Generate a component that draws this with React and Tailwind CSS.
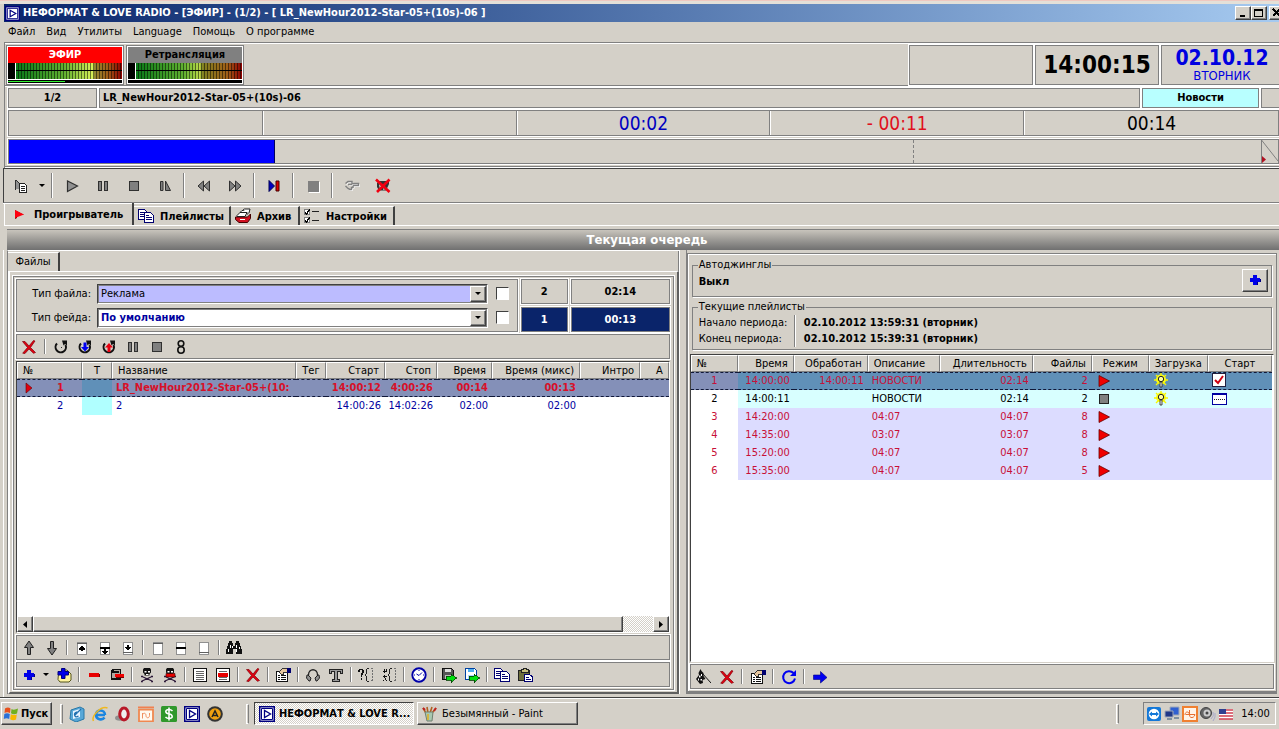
import React from 'react';

const CELL = 'border border-[#808080] shadow-[0_0_0_1px_#fff]';
const RAISED =
  'border border-t-white border-l-white border-r-[#404040] border-b-[#404040] shadow-[inset_-1px_-1px_0_#808080]';
const SUNKEN = 'border border-t-[#404040] border-l-[#404040] border-r-white border-b-white';

function Svg({ children, size = 16, crisp = true }) {
  return (
    <svg
      width={size}
      height={size}
      viewBox="0 0 16 16"
      fill="none"
      shapeRendering={crisp ? 'crispEdges' : 'auto'}
      className="shrink-0"
      aria-hidden="true"
    >
      {children}
    </svg>
  );
}

const RedCross = () => (
  <Svg crisp={false}>
    <path d="M1.500 2.500h2.500L8 7l4.500-5.500L14 2 9.500 8.500l5 5-2 .8L8 10l-4 4.500-2.300-.3L6.500 8.500z" fill="#e00010" stroke="#800008" strokeWidth=".7" />
  </Svg>
);
const Plus = () => (
  <Svg><path d="M6 3h4v3h3v4h-3v3H6v-3H3V6h3z" fill="#0000e8" /><path d="M7 13h4v-3h3V7h-1v3h-3v3H7z" fill="#000080" /></Svg>
);
const Stop = () => (
  <Svg><path d="M3.500 3.500h9v9h-9z" fill="#808080" stroke="#303030" /></Svg>
);
const Pause = () => (
  <Svg><path d="M3.500 3.500h3v9h-3zM9.500 3.500h3v9h-3z" fill="#808080" stroke="#303030" /></Svg>
);
const Caret = () => (
  <svg width="6" height="3" viewBox="0 0 6 3" aria-hidden="true"><path d="M0 0h6L3 3z" fill="#000" /></svg>
);
const Play = () => (
  <Svg crisp={false}><path d="M3.500 3v10.500L13.500 8z" fill="#909090" stroke="#303030" strokeWidth="1.200" /></Svg>
);
const Pages = () => (
  <Svg>
    <path d="M.5 1.500h6l2 2v8h-8z" fill="#fff" stroke="#000070" />
    <path d="M2 4.500h4M2 6.500h4M2 8.500h4" stroke="#000070" />
    <path d="M6.500 4.500h6l3 3v7h-9z" fill="#fff" stroke="#000070" />
    <path d="M8 7.500h3M8 9.500h6M8 11.500h6" stroke="#000070" />
  </Svg>
);
const GreyPages = () => (
  <Svg>
    <path d="M2.500 2v10M2.500 2l5 4" stroke="#303030" />
    <path d="M3 3v8h3V5z" fill="#909090" />
    <path d="M6.500 5.500h5l2 2v7h-7z" fill="#fff" stroke="#222" />
    <path d="M8 8.500h4M8 10.500h4M8 12.500h4" stroke="#222" />
  </Svg>
);
const FadeIcon = () => (
  <Svg crisp={false}><path d="M3.500 3.500h2.500v9H3.500zM8.500 3v9.500h5z" fill="#808080" stroke="#303030" /></Svg>
);
const Rewind = () => (
  <Svg crisp={false}><path d="M7.500 3v10L2 8zM13.500 3v10L8 8z" fill="#808080" stroke="#303030" /></Svg>
);
const Forward = () => (
  <Svg crisp={false}><path d="M2.500 3v10L8 8zM8.500 3v10L14 8z" fill="#808080" stroke="#303030" /></Svg>
);
const NextTrack = () => (
  <Svg crisp={false}>
    <path d="M3 2.500v11L8.500 8z" fill="#0000c0" stroke="#000050" />
    <path d="M10 3h3v10h-3z" fill="#d00" stroke="#400" />
  </Svg>
);
const StopGrey = () => (
  <Svg><path d="M4 14h10V4h1v11H4z" fill="#fff" /><path d="M3 3h11v11H3z" fill="#808080" /></Svg>
);
const Hand = ({ color = '#808080' }) => (
  <Svg crisp={false}>
    <path d="M1.500 5.500 4 3.500h4v2h6.500v2H9M9 7.500v2H7.500v2H6L4 10.500 1.500 8M4 6.500h4" stroke="#fff" transform="translate(1 1)" />
    <path d="M1.500 5.500 4 3.500h4v2h6.500v2H9M9 7.500v2H7.500v2H6L4 10.500 1.500 8M4 6.500h4" stroke={color} strokeWidth="1.400" />
  </Svg>
);
const HandCross = () => (
  <Svg crisp={false}>
    <path d="M2 5 4 3h10v3l-3 6.500H4L2 9z" fill="#333" />
    <path d="m4 6 3 3-2 3zM9 9l2 2-3 1z" fill="#e8d8d0" />
    <path d="m1 1.500 13.500 12.500M14.500 1.500 2 14" stroke="#f00010" strokeWidth="2.600" />
  </Svg>
);
const RedPlay = () => (
  <Svg crisp={false}><path d="M3 2.500v11L13.500 8z" fill="#f00000" stroke="#600" strokeWidth=".8" /></Svg>
);
const TabPlay = () => (
  <Svg crisp={false}><path d="M3 3v9l2-1V8l7 0z" fill="#700" /><path d="M3 3v8l9-3.500z" fill="#ff0010" /></Svg>
);
const Archive = () => (
  <Svg crisp={false}>
    <path d="M.5 9h12l3-3v4.500l-3 4H4l-3.500-3z" fill="#d01020" stroke="#400" />
    <path d="m2 7.500 3-3h7l-2 4H2zM5 4.500l2-2h7l-1.500 4" fill="#fff" stroke="#222" />
    <path d="m8 2 1.500-1h5.500l-1 4" fill="#fff" stroke="#222" />
    <path d="M5 11.500h5" stroke="#fff" />
  </Svg>
);
const Checks = () => (
  <Svg>
    <path d="M.5 1.500h5v5h-5zM.5 9.500h5v5h-5z" fill="#fff" stroke="#808080" />
    <path d="m1 4 1.500 2L6 1M1 12l1.500 2L6 9" stroke="#000" strokeWidth="1.300" />
    <path d="M8 3.500h7M8 12.500h7" stroke="#222" />
  </Svg>
);
const Loop = ({ arrow }) => (
  <Svg crisp={false}>
    <path d="M4 4.500A5.200 5.200 0 1 0 12.500 6" stroke="#111" strokeWidth="2" />
    <path d="M9 1.500h5v5l-2-1.500-1.500 1.500z" fill="#111" />
    {arrow === 'down' && <path d="M6.500 3.500h3V8h2.500l-4 4.500L4 8h2.500z" fill="#0000f0" />}
    {arrow === 'up' && <path d="M6.500 13h3V8.500h2.500L8 4 4 8.500h2.500z" fill="#e80010" />}
    {!arrow && <path d="M8 8h1v1H8z" fill="#333" />}
  </Svg>
);
const Eight = () => (
  <Svg crisp={false}>
    <circle cx="8" cy="4.500" r="2.800" stroke="#111" strokeWidth="1.600" />
    <circle cx="8" cy="11" r="3.200" stroke="#111" strokeWidth="1.600" />
  </Svg>
);
const ArrowUp = () => (
  <Svg crisp={false}><path d="m8 1 4.500 6.500H9.500v7h-3v-7H3.500z" fill="#808080" stroke="#222" /></Svg>
);
const ArrowDown = () => (
  <Svg crisp={false}><path d="M8 15 3.500 8.500h3v-7h3v7h3z" fill="#808080" stroke="#222" /></Svg>
);
const Sheet = ({ bar, arrow }) => (
  <Svg>
    <path d="M3.500 2.500h9v12h-9z" fill="#fff" stroke="#909090" />
    {bar === 'top' && <path d="M3 3h10v1H3z" fill="#606060" />}
    {bar === 'mid' && <path d="M3 7h10v2H3z" fill="#000" />}
    {bar === 'low' && <path d="M3 12h10v1H3z" fill="#606060" />}
    {arrow === 'up' && <path d="M7 6h2v1h1v1h1v2H9v1H7v-1H5V8h1V7h1z" fill="#000" />}
    {arrow === 'mid' && <path d="M7 9h2v2h2v1h-1v1H9v1H7v-1H6v-1H5v-1h2z" fill="#000" />}
    {arrow === 'down' && <path d="M7 5h2v2h2v1h-1v1H9v1H7V9H6V8H5V7h2z" fill="#000" />}
  </Svg>
);
const Binoculars = () => (
  <Svg>
    <path d="M3 1h3v2h1v3h2V3h1V1h3v2h1v3h1v3h1v5h-6V9H7v5H0V9h1V6h1V3h1z" fill="#111" />
    <path d="M4 5h1v3H4zM2 9h1v3H2zM10 5h1v3h-1zM10 9h1v3h-1zM6 6h1v2H6zM13 7h1v2h-1z" fill="#fff" />
  </Svg>
);
const PlusBox = () => (
  <Svg crisp={false}>
    <path d="M2.500 6h2l1.500-3h5l4 4v6l-2 2h-9l-2-2.500z" fill="#fff4a0" stroke="#55551c" />
    <path d="M5.500 1.500h3.500v3h3.500V8H9v3.500H5.500V8H2V4.500h3.500z" fill="#0000e8" stroke="#000080" />
  </Svg>
);
const Minus = () => (
  <Svg><path d="M3 6h10v4H3z" fill="#e80000" /><path d="M4 10h10V7h-1v3H4z" fill="#700" /></Svg>
);
const MinusBox = () => (
  <Svg>
    <path d="M2.500 4.500 4.500 2.500h7v10h-9z" fill="#b0a8a0" stroke="#111" strokeWidth="1.500" />
    <path d="M2 5h8M3 11.500h8" stroke="#111" strokeWidth="1.500" />
    <path d="M6 7h9v3H6z" fill="#f00000" />
    <path d="M7 10h8v1H7z" fill="#700" />
  </Svg>
);
const Skull = ({ red }) => (
  <Svg crisp={false}>
    <path d="M5 1h6l1 1.500v3L10.500 7v1.500h-5V7L4 5.500v-3z" fill="#111" />
    <path d="M5.500 4h2v1.500h-2zM9 4h2v1.500H9zM7 7h2.500v1H7z" fill="#fff" />
    <path d="m3 9.500 10 4.500M13 9.500 3 14M2 9.500h2M12 9.500h2M2 14.500h2M12 14.500h2" stroke="#2b1838" strokeWidth="1.300" />
    {red && <path d="M4 6.500h9v3.500H4z" fill="#e80000" stroke="#300" strokeWidth=".6" />}
  </Svg>
);
const ListSheet = ({ red }) => (
  <Svg>
    <path d="M1.500 1.500h13v13h-13z" fill="#fff" stroke="#111" />
    <path d="M4 4.500h8M4 6.500h8M4 8.500h8M4 10.500h8M4 12.500h8" stroke="#666" />
    {red && <path d="M3 6h10v4H3z" fill="#e80000" />}
  </Svg>
);
const Properties = () => (
  <Svg>
    <path d="M1.500 4.500h11v10h-11z" fill="#fff" stroke="#111" />
    <path d="M3 8.500h2M6 8.500h5M3 10.500h2M6 10.500h5M3 12.500h2M6 12.500h5" stroke="#111" />
    <path d="M4 5 8 1h4v4.500H9L8 8 6 7z" fill="#e8c8a0" stroke="#333" />
    <path d="M12 1h4v5h-4z" fill="#000070" />
  </Svg>
);
const Headphones = () => (
  <Svg crisp={false}>
    <path d="M3.500 10V8C3.500 1 12.500 1 12.500 8v2" stroke="#222" strokeWidth="1.300" />
    <path d="M2 8h1l3 3-1 3H4L1.500 11zM14 8h-1l-3 3 1 3h1l2.500-3z" fill="#909090" stroke="#222" />
  </Svg>
);
const LetterT = () => (
  <Svg>
    <path d="M1.500 2.500h13v4h-2v-2h-3v8h2v2h-7v-2h2v-8h-3v2h-2z" fill="#999" stroke="#222" />
  </Svg>
);
const Braces = ({ query }) => (
  <Svg>
    {query ? (
      <path d="M1 5V3.500L2 2.500h2l1 1v2L3.500 8v1.500M3.500 11v2" stroke="#111" strokeWidth="1.800" />
    ) : (
      <path d="M3 2v4M5 2v2H2M2 9h4M3 8v3M2 13h1M5 13h1M4 11v2" stroke="#111" />
    )}
    <path d="M10.500 1.500h-1l-1 1v4l-1 1.500 1 1.500v4l1 1h1" stroke="#222" />
    <path d="M12.500 1.500h2v12h-2" stroke="#707070" strokeDasharray="2 1" />
  </Svg>
);
const Clock = () => (
  <Svg crisp={false}>
    <circle cx="8" cy="8" r="6.700" fill="#fff" stroke="#0000a8" strokeWidth="1.900" />
    <path d="M8 3v1M8 12v1M3 8h1M12 8h1M11 5.500 8 8.500 5.500 7" stroke="#0000a8" />
  </Svg>
);
const DiskArrow = ({ blue }) => (
  <Svg>
    <path d="M1.500 1.500h9l2 2v9h-11z" fill={blue ? '#fff' : '#555'} stroke={blue ? '#0040a0' : '#111'} />
    <path d="M4 2h6v3H4z" fill={blue ? '#50b0f0' : '#ddd'} />
    <path d="M4 8h6v4H4z" fill={blue ? '#a8d8ff' : '#bbb'} />
    <path d="M5 9h5V7l5.500 4-5.500 4.500V13H5z" fill="#00e010" stroke="#004000" strokeWidth=".8" />
  </Svg>
);
const Paste = () => (
  <Svg>
    <path d="M1.500 3.500h11v10h-11z" fill="#6e6e3c" stroke="#222" />
    <path d="M4 2h2V1h3v1h2v3H4z" fill="#c8c080" stroke="#222" />
    <path d="M7.500 7.500h5l2.500 2v5H7.500z" fill="#fff" stroke="#000070" />
    <path d="M9 10.500h3M9 12.500h5" stroke="#000070" />
  </Svg>
);
const Tool = () => (
  <Svg crisp={false}>
    <path d="m5.500 0-2 4 .5 2-3 4 4 5 3-1-.5-3 3-1-2-3V4L6.500 2z" fill="#111" />
    <path d="M4 6.500h1.500v2H4zM5.500 10H7v1.500H5.500zM3 9.500h1v2H3zM6 5h1v2H6z" fill="#fff" />
    <path d="m7 4 9 10" stroke="#111" />
  </Svg>
);
const Refresh = () => (
  <Svg crisp={false}>
    <path d="M12.500 4A6 6 0 1 0 14 9.500" stroke="#0000f0" strokeWidth="2" />
    <path d="M15 1v6H9z" fill="#0000f0" />
  </Svg>
);
const BlueArrow = () => (
  <Svg crisp={false}><path d="M1.500 6h7V2.500L15 8.500 8.500 14v-3.500h-7z" fill="#0000f0" stroke="#000080" strokeWidth=".6" /></Svg>
);
const Bulb = () => (
  <Svg crisp={false}>
    <circle cx="8" cy="6.500" r="5" fill="#ffff20" />
    <path d="M8 0v14M1 7h14M3 2l10 10M13 2 3 12" stroke="#f8f800" strokeWidth="1.400" />
    <circle cx="8" cy="6" r="2.700" fill="#ffffa0" stroke="#222" />
    <path d="M7 9h2v5H7z" fill="#eee" stroke="#222" strokeWidth=".8" />
  </Svg>
);
const StopSmall = () => (
  <Svg><path d="M3.500 3.500h9v9h-9z" fill="#808080" stroke="#222" /></Svg>
);
const CalendarBox = () => (
  <Svg>
    <path d="M.5 2.500h14v11H.5z" fill="#fff" stroke="#0000a0" />
    <path d="M1 3h13v1H1z" fill="#0000a0" />
    <path d="M2 8.500h11" stroke="#222" strokeDasharray="1 1" />
  </Svg>
);
const AppLogo = ({ size = 16 }) => (
  <Svg size={size} crisp={false}>
    <path d="M0 0h16v16H0z" fill="#000080" />
    <path d="M1.500 1.500h13v13h-13z" fill="#fff" />
    <path d="M2.500 2.500h11v11h-11z" stroke="#000080" />
    <path d="M5.500 4.500v7l6-3.500z" fill="#fff" stroke="#000080" strokeWidth="1.300" />
  </Svg>
);
const WindowsFlag = () => (
  <Svg crisp={false}>
    <path d="M2 2.500q3-2 5.500 0L7 7Q4 5.500 1.500 7z" fill="#e8501c" />
    <path d="M8.500 3Q11 4.500 15 2.500L14 7.500q-3 1.500-6-.2z" fill="#70b020" />
    <path d="M1.300 8Q4 6.500 6.800 8l-.6 5Q3.500 11.500.8 13z" fill="#2870d8" />
    <path d="M7.800 8.300q3 1.500 6 .2l-.8 5q-3 1.500-5.800-.2z" fill="#f8b800" />
  </Svg>
);
const DesktopIcon = () => (
  <Svg crisp={false}>
    <path d="m2 4 9-3 4 2v10l-8 3-6-3z" fill="#58a8d8" stroke="#2878a8" />
    <path d="m4 5 7-2v8l-7 2z" fill="#e8f4ff" />
    <path d="M9.500 6Q5 6 5.500 9t4 1M6 9l6-6" stroke="#2070b0" strokeWidth="1.300" />
  </Svg>
);
const BrowserE = () => (
  <Svg crisp={false}>
    <path d="M13 9H4.500M13 9c0-6-9-6-9-.5 0 5.500 6.500 6 8.500 3" stroke="#1c86e0" strokeWidth="2.600" />
    <path d="M1.500 15C-1 10 9-.5 15.500 2" stroke="#f0b820" strokeWidth="1.500" />
  </Svg>
);
const OperaO = () => (
  <Svg crisp={false}>
    <ellipse cx="5" cy="12" rx="5" ry="2.800" fill="#909090" />
    <ellipse cx="9" cy="8" rx="4.300" ry="6" fill="#eee" stroke="#b81828" strokeWidth="3" />
  </Svg>
);
const WaveApp = () => (
  <Svg crisp={false}>
    <path d="M0 .5h16v1.500H0z" fill="#f08050" />
    <path d="M1 3.500h14v12H1z" fill="#fffaf0" stroke="#f08850" strokeWidth="1.800" />
    <path d="M4.500 7v5.500M4.500 9.500c0-3 3.500-3 3.500 0s3.500 3 3.500 0V7" stroke="#f09060" />
  </Svg>
);
const WaveTray = () => (
  <Svg crisp={false}>
    <path d="M0 0h16v16H0z" fill="#f08030" />
    <path d="M2 2h12v12H2z" fill="#fff4e8" />
    <path d="M3 9c0-4 4.500-4 4.500 0s5 3 5.500-.5H4M7.500 4v5" stroke="#e87030" />
  </Svg>
);
const Dollar = () => (
  <Svg crisp={false}>
    <rect width="16" height="16" rx="1.500" fill="#30982c" />
    <path d="M11.500 5Q10 3.500 8 3.500C3.500 3.500 4 7.500 8 8s4.500 4.500 0 4.500Q6 12.500 4.500 11M8 1.500v13" stroke="#fff" strokeWidth="1.600" />
  </Svg>
);
const CircleA = () => (
  <Svg crisp={false}>
    <circle cx="8" cy="8" r="7.800" fill="#333" />
    <circle cx="8" cy="8" r="5.800" fill="#f0a010" />
    <path d="m5 11 3-6 3 6M6 9.500h4" stroke="#222" strokeWidth="1.500" />
  </Svg>
);
const PaintCup = () => (
  <Svg crisp={false}>
    <path d="m4 7-3-5M6 7 5 1M8 7l2-6M10 7l4-5" stroke="#b06020" strokeWidth="1.600" />
    <path d="m1 2 2 2M14 2l-2 3" stroke="#c02020" strokeWidth="2" />
    <path d="M3 6h8l-1 9H5z" fill="#a8c8b0" stroke="#708070" />
    <path d="M6 8v6" stroke="#e0b020" strokeWidth="1.500" />
  </Svg>
);
const TeamIcon = () => (
  <Svg crisp={false}>
    <rect x="1" y="1" width="14" height="14" rx="2" fill="#1478d8" />
    <circle cx="8" cy="8" r="5.300" fill="#fff" />
    <path d="m3 8 3-2.500V7h4V5.500L13 8l-3 2.500V9H6v1.500z" fill="#1478d8" />
  </Svg>
);
const Network = () => (
  <Svg crisp={false}>
    <path d="M6 1h9v8H6z" fill="#3060d0" stroke="#a0a8b8" />
    <path d="M1 5h8v6H1z" fill="#203888" stroke="#a0a8b8" />
    <path d="M3 13h5M10 12h5" stroke="#8090a0" strokeWidth="2" />
  </Svg>
);
const Speaker = () => (
  <Svg crisp={false}>
    <circle cx="6" cy="7" r="5.500" fill="#666" stroke="#444" />
    <circle cx="7" cy="7" r="3.500" fill="#ccc" />
    <circle cx="7" cy="7" r="1.500" fill="#444" />
    <path d="M13 6q1.500 4-2 7M15 7q1 4-2 8" stroke="#a8a8c8" />
  </Svg>
);
const Flag = () => (
  <Svg crisp={false}>
    <path d="M1 3h14v10H1z" fill="#fff" />
    <path d="M1 4h14M1 7h14M1 10h14M1 13h14" stroke="#d04050" strokeWidth="1.500" />
    <path d="M1 3h7v5H1z" fill="#304090" />
  </Svg>
);

const Sep = ({ width = 'w-2' }) => (
  <span className={`flex shrink-0 justify-center self-stretch py-1 ${width}`}>
    <span className="w-[2px] border-l border-r border-l-[#808080] border-r-white" />
  </span>
);

function ToolButton({ label, width = 'w-[23px]', children }) {
  return (
    <button type="button" aria-label={label} className={`flex h-full shrink-0 items-center justify-center ${width}`}>
      {children}
    </button>
  );
}

function ToolBar({ items, width, sep, className }) {
  return (
    <div role="toolbar" className={`flex shrink-0 items-center ${className}`}>
      {items.map((item, i) =>
        item === '|' ? (
          <Sep key={i} width={sep} />
        ) : (
          <ToolButton key={i} label={item[0]} width={item[2] || width}>
            {item[1]}
          </ToolButton>
        )
      )}
    </div>
  );
}

const transport = [
  ['Списки', <GreyPages />],
  ['Меню списков', <Caret />, 'w-3'],
  '|',
  ['Пуск', <Play />], ['Пауза', <Pause />], ['Стоп', <Stop />], ['Затухание', <FadeIcon />],
  '|',
  ['Назад', <Rewind />], ['Вперёд', <Forward />],
  '|',
  ['Следующий', <NextTrack />],
  '|',
  ['Остановить', <StopGrey />],
  '|',
  ['Ручной режим', <Hand />], ['Отключить ручной режим', <HandCross />],
];
const queueTools = [
  ['Удалить', <RedCross />],
  '|',
  ['Повтор', <Loop />], ['Повтор вниз', <Loop arrow="down" />], ['Повтор вверх', <Loop arrow="up" />],
  ['Пауза', <Pause />], ['Стоп', <Stop />], ['Цикл', <Eight />],
];
const moveTools = [
  ['Вверх', <ArrowUp />], ['Вниз', <ArrowDown />],
  '|',
  ['В начало', <Sheet bar="top" arrow="up" />], ['В середину', <Sheet bar="mid" arrow="mid" />], ['В конец', <Sheet bar="low" arrow="down" />],
  '|',
  ['Начало', <Sheet bar="top" />], ['Середина', <Sheet bar="mid" />], ['Конец', <Sheet bar="low" />],
  '|',
  ['Поиск', <Binoculars />],
];
const editTools = [
  ['Добавить', <Plus />], ['Меню добавления', <Caret />, 'w-3'], ['Добавить из файла', <PlusBox />],
  '|',
  ['Убрать', <Minus />], ['Убрать файл', <MinusBox />],
  '|',
  ['Мёртвые', <Skull />], ['Убрать мёртвые', <Skull red />],
  '|',
  ['Список', <ListSheet />], ['Очистить список', <ListSheet red />],
  '|',
  ['Удалить', <RedCross />],
  '|',
  ['Свойства', <Properties />],
  '|',
  ['Прослушать', <Headphones />], ['Текст', <LetterT />],
  '|',
  ['Запрос', <Braces query />], ['Условия', <Braces />],
  '|',
  ['Время', <Clock />],
  '|',
  ['Сохранить', <DiskArrow />], ['Экспорт', <DiskArrow blue />],
  '|',
  ['Копировать', <Pages />], ['Вставить', <Paste />],
];
const listTools = [
  ['Инструмент', <Tool />], ['Удалить', <RedCross />],
  '|',
  ['Свойства', <Properties />],
  '|',
  ['Обновить', <Refresh />],
  '|',
  ['Перейти', <BlueArrow />],
];

function Channel({ name, bar, level, meter }) {
  return (
    <div className="flex w-[118px] flex-col border border-[#808080] bg-white p-px">
      <div className={`flex h-4 items-center justify-center font-bold ${bar}`}>{name}</div>
      <div className="flex h-4 bg-black">
        <div className={`ml-[7px] flex-1 border-l border-white ${meter}`}>
          <div className="h-full bg-[repeating-linear-gradient(90deg,#00000000_0_2px,#00000080_2px_3px)]">
            <div className="h-2 border-b border-black" />
          </div>
        </div>
      </div>
      <div className="mt-px h-[3px] shrink-0 bg-black pt-px">
        <div className={`h-px bg-[#30f030] ${level}`} />
      </div>
    </div>
  );
}

const HEAD =
  'h-[17px] overflow-hidden whitespace-nowrap border border-t-white border-l-white border-r-[#808080] border-b-[#808080] bg-[#d4d0c8] p-0 px-[5px] leading-[14px] font-normal';

function LeftTable() {
  const cols = [
    ['№', 'w-[65px]', 'text-left'], ['T', 'w-[30px]', 'text-center'], ['Название', 'w-[184px]', 'text-left'],
    ['Тег', 'w-[30px]', 'text-center'], ['Старт', 'w-[59px]', 'text-right'], ['Стоп', 'w-[52px]', 'text-right'],
    ['Время', 'w-[55px]', 'text-right'], ['Время (микс)', 'w-[88px]', 'text-right'], ['Интро', 'w-[60px]', 'text-right'],
    ['А', 'w-auto', 'text-right'],
  ];
  const sel = 'h-[18px] overflow-hidden whitespace-nowrap border-y border-dashed border-[#101838] p-0 leading-[16px]';
  const row = 'h-[18px] overflow-hidden whitespace-nowrap p-0 leading-[18px]';
  return (
    <table className="w-full table-fixed border-separate border-spacing-0">
      <thead>
        <tr>
          {cols.map(([t, w, a]) => (
            <th key={t} scope="col" className={`${HEAD} ${w} ${a}`}>{t}</th>
          ))}
        </tr>
      </thead>
      <tbody>
        <tr className="bg-[#8490b8] font-bold text-[#d81028]">
          <td className={sel}>
            <div className="flex items-center">
              <span className="ml-1 w-8"><Svg crisp={false}><path d="M5 3v10l6-5z" fill="#e00010" stroke="#600" strokeWidth=".6" /></Svg></span>
              <span className="ml-1">1</span>
            </div>
          </td>
          <td className={`${sel} bg-[#6090b8]`} />
          <td className={`${sel} pl-1`}>LR_NewHour2012-Star-05+(10:</td>
          <td className={sel} />
          <td className={`${sel} pr-1 text-right`}>14:00:12</td>
          <td className={`${sel} pr-1 text-right`}>4:00:26</td>
          <td className={`${sel} pr-1 text-right`}>00:14</td>
          <td className={`${sel} pr-1 text-right`}>00:13</td>
          <td className={sel} />
          <td className={sel} />
        </tr>
        <tr className="text-[#0000a0]">
          <td className={`${row} pl-10`}>2</td>
          <td className={`${row} bg-[#b0ffff]`} />
          <td className={`${row} pl-1`}>2</td>
          <td className={row} />
          <td className={`${row} pr-1 text-right`}>14:00:26</td>
          <td className={`${row} pr-1 text-right`}>14:02:26</td>
          <td className={`${row} pr-1 text-right`}>02:00</td>
          <td className={`${row} pr-1 text-right`}>02:00</td>
          <td className={row} />
          <td className={row} />
        </tr>
      </tbody>
    </table>
  );
}

const periods = [
  { n: 1, time: '14:00:00', done: '14:00:11', desc: 'НОВОСТИ', len: '02:14', files: 2, mode: 'play', load: true, start: 'check' },
  { n: 2, time: '14:00:11', done: '', desc: 'НОВОСТИ', len: '02:14', files: 2, mode: 'stop', load: true, start: 'cal' },
  { n: 3, time: '14:20:00', done: '', desc: '04:07', len: '04:07', files: 8, mode: 'play' },
  { n: 4, time: '14:35:00', done: '', desc: '03:07', len: '03:07', files: 8, mode: 'play' },
  { n: 5, time: '15:20:00', done: '', desc: '04:07', len: '04:07', files: 8, mode: 'play' },
  { n: 6, time: '15:35:00', done: '', desc: '04:07', len: '04:07', files: 5, mode: 'play' },
];

function RightTable() {
  const cols = [
    ['№', 'w-[47px]', 'text-left'], ['Время', 'w-[56px]', 'text-right'], ['Обработан', 'w-[74px]', 'text-right'],
    ['Описание', 'w-[72px]', 'text-left'], ['Длительность', 'w-[93px]', 'text-right'], ['Файлы', 'w-[59px]', 'text-right'],
    ['Режим', 'w-[57px]', 'text-center'], ['Загрузка', 'w-[59px]', 'text-center'], ['Старт', 'w-auto', 'text-center'],
  ];
  return (
    <table className="w-full table-fixed border-separate border-spacing-0">
      <thead>
        <tr>
          {cols.map(([t, w, a]) => (
            <th key={t} scope="col" className={`${HEAD} ${w} ${a}`}>{t}</th>
          ))}
        </tr>
      </thead>
      <tbody>
        {periods.map((p) => {
          const selected = p.n === 1;
          const td = `h-[18px] overflow-hidden whitespace-nowrap p-0 ${
            selected ? 'border-y border-dashed border-[#101838] leading-[16px]' : 'leading-[18px]'
          }`;
          const bg = selected ? 'bg-[#6090b8]' : p.n === 2 ? 'bg-[#d8ffff]' : 'bg-[#dcdcff]';
          return (
            <tr key={p.n} className={p.n === 2 ? 'text-black' : 'text-[#c81038]'}>
              <td className={`${td} text-center ${selected ? 'bg-[#8490b8]' : 'bg-white'}`}>{p.n}</td>
              <td className={`${td} ${bg} pr-1 text-right`}>{p.time}</td>
              <td className={`${td} ${bg} pr-1 text-right`}>{p.done}</td>
              <td className={`${td} ${bg} pl-1`}>{p.desc}</td>
              <td className={`${td} ${bg} pr-1 text-right`}>{p.len}</td>
              <td className={`${td} ${bg} pr-1 text-right`}>{p.files}</td>
              <td className={`${td} ${bg} pl-1`}>{p.mode === 'play' ? <RedPlay /> : <StopSmall />}</td>
              <td className={`${td} ${bg} pl-1`}>{p.load && <Bulb />}</td>
              <td className={`${td} ${bg} pl-1`}>
                {p.start === 'check' && (
                  <span className="relative block size-4">
                    <input type="checkbox" defaultChecked aria-label="Старт" className="block size-[14px] appearance-none border border-[#202040] bg-white" />
                    <svg viewBox="0 0 14 14" className="pointer-events-none absolute top-0 left-0 size-[14px]" aria-hidden="true">
                      <path d="m3 7 3 3 5-7" stroke="#d00010" strokeWidth="2" fill="none" />
                    </svg>
                  </span>
                )}
                {p.start === 'cal' && <CalendarBox />}
              </td>
            </tr>
          );
        })}
      </tbody>
    </table>
  );
}

function Field({ id, label, value, look }) {
  return (
    <div className="flex items-center">
      <label htmlFor={id} className="w-[74px] text-right">{label}</label>
      <div className={`relative ml-[6px] h-5 flex-1 bg-white ${SUNKEN}`}>
        <select id={id} defaultValue={value} className={`block h-full w-full appearance-none border border-[#808080] pt-px pl-[2px] outline-none ${look}`}>
          <option>{value}</option>
        </select>
        <span className={`pointer-events-none absolute top-px right-px bottom-px flex w-4 items-center justify-center bg-[#d4d0c8] ${RAISED}`}>
          <Caret />
        </span>
      </div>
      <input type="checkbox" aria-label={`${label} фиксировать`} className={`mr-2 ml-2 size-[13px] appearance-none bg-white ${SUNKEN}`} />
    </div>
  );
}

function ScrollButton({ dir }) {
  return (
    <button type="button" aria-label={dir === 'left' ? 'Влево' : 'Вправо'} className={`flex w-4 items-center justify-center bg-[#d4d0c8] ${RAISED}`}>
      <svg width="4" height="7" viewBox="0 0 4 7" aria-hidden="true">
        <path d={dir === 'left' ? 'M4 0v7L0 3.500z' : 'M0 0v7l4-3.500z'} fill="#000" />
      </svg>
    </button>
  );
}

function LeftPanel() {
  return (
    <section className="flex min-w-0 flex-[674] flex-col border-t border-l border-[#808080] border-t-white">
      <div className="flex h-5 shrink-0 items-end border-r border-[#808080]">
        <a href="#files" className="flex h-[19px] w-[52px] items-center justify-center border-t border-r-2 border-t-white border-r-[#404040]">Файлы</a>
      </div>
      <div className="flex min-h-0 flex-1 flex-col border-2 border-t border-white border-r-[#606060] border-b-[#606060] px-[2px] pt-[3px] pb-px">
        <div className={`m-px flex min-h-0 flex-1 flex-col gap-[2px] p-[2px] pr-[3px] ${CELL}`}>
          <div className="flex h-[53px] shrink-0 gap-[3px]">
            <div className={`flex flex-1 flex-col justify-center gap-1 ${CELL}`}>
              <Field id="file-type" label="Тип файла:" value="Реклама" look="bg-[#bcbcff] text-black" />
              <Field id="fade-type" label="Тип фейда:" value="По умолчанию" look="bg-white font-bold text-[#0000a0]" />
            </div>
            <div className="grid w-[149px] grid-cols-[47px_1fr] grid-rows-2 gap-[3px] font-bold">
              <div className={`flex items-center justify-center ${CELL}`}>2</div>
              <div className={`flex items-center justify-center ${CELL}`}>02:14</div>
              <div className={`flex items-center justify-center bg-[#0a246a] text-white ${CELL}`}>1</div>
              <div className={`flex items-center justify-center bg-[#0a246a] text-white ${CELL}`}>00:13</div>
            </div>
          </div>
          <ToolBar items={queueTools} width="w-6" className={`h-[25px] ${CELL}`} />
          <div className={`flex min-h-0 flex-1 flex-col bg-white ${SUNKEN}`}>
            <div className="min-h-0 flex-1 overflow-hidden"><LeftTable /></div>
            <div className="flex h-4 shrink-0 bg-[repeating-conic-gradient(#fff_0_25%,#d4d0c8_0_50%)] bg-[size:2px_2px]">
              <ScrollButton dir="left" />
              <div className={`flex-1 bg-[#d4d0c8] ${RAISED}`} />
              <div className="w-[30px]" />
              <ScrollButton dir="right" />
            </div>
          </div>
          <ToolBar items={moveTools} width="w-[23px]" sep="w-[7px]" className={`h-[25px] ${CELL}`} />
          <ToolBar items={editTools} width="w-[23px]" sep="w-[7px]" className={`h-[25px] ${CELL}`} />
        </div>
      </div>
    </section>
  );
}

function RightPanel() {
  return (
    <section className="mt-[3px] mr-[2px] flex min-w-0 flex-[587] flex-col border border-b-[3px] border-[#808080] p-[2px] shadow-[inset_1px_1px_0_#fff]">
      <fieldset className="mx-[2px] mt-[3px] h-[38px] shrink-0 border border-[#808080] px-[6px] shadow-[1px_1px_0_#fff]">
        <legend className="-ml-px px-px leading-3">Автоджинглы</legend>
        <div className="-mt-[3px] flex h-6 items-center justify-between">
          <span className="pt-1 font-bold">Выкл</span>
          <button type="button" aria-label="Добавить автоджингл" className={`-mr-[3px] flex h-[23px] w-[26px] items-center justify-center ${RAISED}`}>
            <Plus />
          </button>
        </div>
      </fieldset>
      <fieldset className="mx-[2px] mt-1 flex h-[49px] shrink-0 border border-[#808080] px-[6px] shadow-[1px_1px_0_#fff]">
        <legend className="-ml-px px-px leading-3">Текущие плейлисты</legend>
        <dl className="mt-[2px] grid h-8 flex-1 grid-cols-[96px_1fr] grid-rows-2 items-center leading-4">
          <dt>Начало периода:</dt>
          <dd className="border-l border-white pl-2 font-bold shadow-[-1px_0_0_#808080]">02.10.2012 13:59:31 (вторник)</dd>
          <dt>Конец периода:</dt>
          <dd className="border-l border-white pl-2 font-bold shadow-[-1px_0_0_#808080]">02.10.2012 15:39:31 (вторник)</dd>
        </dl>
      </fieldset>
      <div className={`mt-1 min-h-0 flex-1 overflow-hidden bg-white pr-px ${SUNKEN}`}><RightTable /></div>
      <ToolBar items={listTools} width="w-6" sep="w-[7px]" className={`mt-[2px] h-[25px] ${CELL}`} />
    </section>
  );
}

const tabs = [
  ['Плейлисты', <Pages />, 'w-[97px]'],
  ['Архив', <Archive />, 'w-[69px]'],
  ['Настройки', <Checks />, 'w-[95px]'],
];

function WindowButton({ label, children, className = '' }) {
  return (
    <button type="button" aria-label={label} className={`flex h-[14px] w-4 shrink-0 items-center justify-center bg-[#d4d0c8] ${RAISED} ${className}`}>
      <svg width="10" height="10" viewBox="0 0 10 10" fill="none" stroke="#000" shapeRendering="crispEdges" aria-hidden="true">{children}</svg>
    </button>
  );
}

export default function App() {
  return (
    <div className="flex h-screen min-h-[600px] flex-col overflow-hidden bg-[#d4d0c8] font-['DejaVu_Sans_Condensed','DejaVu_Sans',sans-serif] text-[11px] leading-[14px] text-black">
      <div className="h-1 shrink-0 border-t border-[#f0c8c0] bg-[#e4e0d8]" />
      <header className="ml-1 flex h-[18px] shrink-0 items-center bg-linear-to-r from-[#0a246a] to-[#a6caf0] pl-px text-white">
        <AppLogo size={15} />
        <h1 className="ml-[3px] flex-1 font-bold whitespace-nowrap">НЕФОРМАТ &amp; LOVE RADIO - [ЭФИР] - (1/2) - [ LR_NewHour2012-Star-05+(10s)-06 ]</h1>
        <div className="-mr-[6px] flex">
          <WindowButton label="Свернуть"><path d="M2 8h5" strokeWidth="2" /></WindowButton>
          <WindowButton label="Развернуть"><path d="M.5 1.500h8v7h-8zM0 1.500h9" /><path d="M0 2h9" /></WindowButton>
          <WindowButton label="Закрыть" className="ml-[2px]"><path d="m1 1 7 7M8 1 1 8" strokeWidth="1.500" /></WindowButton>
        </div>
      </header>
      <nav className="flex h-5 shrink-0 items-center gap-[11px] pl-2">
        {['Файл', 'Вид', 'Утилиты', 'Language', 'Помощь', 'О программе'].map((m) => (
          <button key={m} type="button">{m}</button>
        ))}
      </nav>

      <div className="ml-1 shrink-0 border-t border-l border-[#808080]">
        <div className="flex h-[42px] gap-[2px] border-t border-white pt-px pl-px">
          <Channel name="ЭФИР" bar="bg-[#ff0000] text-white" level="w-1/2" meter="bg-[linear-gradient(90deg,#087818,#60b030_45%,#d8f058_73%,#908830_74%,#a06018_86%,#900000)]" />
          <Channel name="Ретрансляция" bar="bg-[#808080] text-black" level="w-0" meter="bg-[linear-gradient(90deg,#087818,#60b030_45%,#b8d848_60%,#808020_63%,#a06018_86%,#900000)]" />
          <div className="flex-1" />
          <div className={`w-[124px] ${CELL}`} />
          <time className={`flex w-[124px] items-center justify-center text-[24px] font-bold ${CELL}`}>14:00:15</time>
          <div className={`-mr-1 flex w-[122px] flex-col items-center justify-center text-[#0000e0] ${CELL}`}>
            <div className="text-[21px] leading-[22px] font-bold">02.10.12</div>
            <div className="text-[13px] leading-[14px]">ВТОРНИК</div>
          </div>
        </div>
        <div className="h-[2px] border-t border-b border-t-[#808080] border-b-white" />
        <div className="mt-px ml-[3px] flex h-5 gap-[2px] font-bold">
          <div className={`flex w-[89px] items-center justify-center ${CELL}`}>1/2</div>
          <div className={`flex flex-1 items-center pl-[3px] ${CELL}`}>LR_NewHour2012-Star-05+(10s)-06</div>
          <div className={`flex w-[117px] items-center justify-center bg-[#b8ffff] ${CELL}`}>Новости</div>
          <div className={`-mr-1 w-[22px] ${CELL}`} />
        </div>
        <div className="mt-[2px] ml-[3px] grid h-[26px] grid-cols-5 divide-x divide-[#808080] border border-[#808080] text-[19px] leading-6 shadow-[0_0_0_1px_#fff]">
          <div />
          <div className="border-l border-l-white" />
          <div className="border-l border-l-white text-center text-[#0000c0]">00:02</div>
          <div className="border-l border-l-white text-center text-[#e01020]">- 00:11</div>
          <div className="border-l border-l-white text-center">00:14</div>
        </div>
        <div className="relative mt-[3px] ml-[3px] h-[25px] border border-[#808080] shadow-[0_0_0_1px_#fff]">
          <div className="h-full w-[21%] border-r border-[#000060] bg-[#0000ff]" />
          <div className="absolute inset-y-0 left-[71.2%] border-l border-dashed border-[#808080]" />
          <svg className="absolute top-0 right-0" width="17" height="23" viewBox="0 0 17 23" fill="none" aria-hidden="true">
            <path d="M.5 0v23M.5 0 17 21" stroke="#808080" />
            <path d="M1 16v7l4-3.500z" fill="#b01020" />
          </svg>
        </div>
        <div className="mt-[2px] h-[2px] border-t border-b border-t-[#808080] border-b-white" />
      </div>

      <ToolBar items={transport} width="w-[31px]" className="ml-[3px] h-[35px] border border-r-0 border-[#404040] border-b-[#808080] pl-px shadow-[0_1px_0_#fff]" />

      <div className="ml-1 flex h-[23px] shrink-0 items-end border-b border-white font-bold">
        <a href="#player" className="flex h-[22px] w-[130px] items-center gap-[6px] border-l border-r-2 border-white border-r-[#404040] pt-px pl-[7px]"><TabPlay /><span>Проигрыватель</span></a>
        {tabs.map(([t, icon, w]) => (
          <a key={t} href={`#${t}`} className={`flex h-[19px] items-center gap-[6px] border-t border-r-2 border-t-white border-r-[#404040] pl-1 ${w}`}>{icon}<span className="pt-[2px]">{t}</span></a>
        ))}
      </div>

      <h2 className="mt-[3px] ml-[7px] flex h-[21px] shrink-0 items-center justify-center border-t border-[#808080] bg-linear-to-b from-[#c8c4bc] to-[#707070] pl-2 text-[13px] font-bold text-white">Текущая очередь</h2>

      <main className="ml-[3px] flex min-h-0 flex-1 border-l border-white pb-[3px] pl-[3px]">
        <LeftPanel />
        <div className="w-2 shrink-0 border-x border-[#808080] border-l-white" />
        <RightPanel />
      </main>

      <footer className="flex h-[32px] shrink-0 items-center border-t border-[#404040] pl-px shadow-[inset_0_1px_0_#fff]">
        <button type="button" className={`flex h-[23px] w-[51px] items-center gap-[2px] pl-px font-bold ${RAISED}`}><WindowsFlag />Пуск</button>
        <span className="ml-2 h-5 w-[3px] border border-white border-r-[#808080]" />
        <div className="ml-[2px] flex flex-1 items-center">
          {[['Рабочий стол', <DesktopIcon />], ['Браузер', <BrowserE />], ['Opera', <OperaO />], ['Волна', <WaveApp />], ['Финансы', <Dollar />], ['Радио', <AppLogo />], ['Плеер', <CircleA />]].map(([l, icon]) => (
            <ToolButton key={l} label={l}>{icon}</ToolButton>
          ))}
          <span className="ml-5 h-5 w-[3px] border border-white border-r-[#808080]" />
          <button type="button" className={`ml-[5px] flex h-[23px] w-[160px] items-center gap-1 bg-[repeating-conic-gradient(#fff_0_25%,#d4d0c8_0_50%)] bg-[size:2px_2px] pl-1 font-bold ${SUNKEN}`}><AppLogo />НЕФОРМАТ &amp; LOVE R...</button>
          <button type="button" className={`ml-[3px] flex h-[23px] w-[161px] items-center gap-1 pl-1 ${RAISED}`}><PaintCup />Безымянный - Paint</button>
        </div>
        <span className="mr-6 h-5 w-[3px] border border-white border-r-[#808080]" />
        <div className="mr-[3px] flex h-[23px] w-[133px] items-center gap-[2px] border border-t-[#808080] border-l-[#808080] border-r-white border-b-white pl-[2px]">
          <TeamIcon /><Network /><WaveTray /><Speaker /><Flag />
          <time className="flex-1 text-center">14:00</time>
        </div>
      </footer>
    </div>
  );
}
